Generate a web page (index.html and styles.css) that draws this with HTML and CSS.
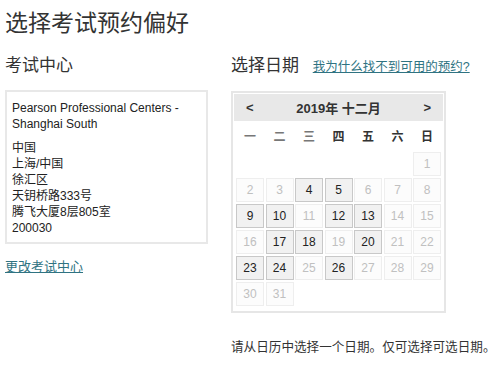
FILE: index.html
```html
<!DOCTYPE html>
<html>
  <head>
    <meta http-equiv="Content-Type" content="text/html; charset=utf-8" />
    <title>选择考试预约偏好</title>
    <link rel="stylesheet" href="styles.css">
  </head>
  <body>
    <div class="page">
      <h1 class="page-title">选择考试预约偏好</h1>
      <div class="columns">
        <section class="center-col">
          <h2 class="col-title">考试中心</h2>
          <div class="center-box">
            <p class="center-name">Pearson Professional Centers - Shanghai South</p>
            <p class="center-addr">
              中国<br />
              上海/中国<br />
              徐汇区<br />
              天钥桥路333号<br />
              腾飞大厦8层805室<br />
              200030
            </p>
          </div>
          <a href="#" class="change-link">更改考试中心</a>
        </section>
        <section class="date-col">
          <h2 class="col-title">
            选择日期
            <a href="#" class="help-link">我为什么找不到可用的预约?</a>
          </h2>
          <div class="calendar">
            <div class="cal-head">
              <span class="cal-nav">&lt;</span>
              <span class="cal-month">2019年 十二月</span>
              <span class="cal-nav">&gt;</span>
            </div>
            <div class="cal-weekdays">
              <span class="light">一</span><span class="light">二</span><span class="light">三</span><span>四</span><span>五</span><span>六</span><span>日</span>
            </div>
            <div class="cal-days">
              <span class="day empty"></span>
              <span class="day empty"></span>
              <span class="day empty"></span>
              <span class="day empty"></span>
              <span class="day empty"></span>
              <span class="day empty"></span>
              <span class="day off">1</span>
              <span class="day off">2</span>
              <span class="day off">3</span>
              <span class="day open">4</span>
              <span class="day open">5</span>
              <span class="day off">6</span>
              <span class="day off">7</span>
              <span class="day off">8</span>
              <span class="day open">9</span>
              <span class="day open">10</span>
              <span class="day off">11</span>
              <span class="day open">12</span>
              <span class="day open">13</span>
              <span class="day off">14</span>
              <span class="day off">15</span>
              <span class="day off">16</span>
              <span class="day open">17</span>
              <span class="day open">18</span>
              <span class="day off">19</span>
              <span class="day open">20</span>
              <span class="day off">21</span>
              <span class="day off">22</span>
              <span class="day open">23</span>
              <span class="day open">24</span>
              <span class="day off">25</span>
              <span class="day open">26</span>
              <span class="day off">27</span>
              <span class="day off">28</span>
              <span class="day off">29</span>
              <span class="day off">30</span>
              <span class="day off">31</span>
            </div>
          </div>
          <p class="cal-note">请从日历中选择一个日期。仅可选择可选日期。</p>
        </section>
      </div>
    </div>
  </body>
</html>
```

FILE: styles.css
```css
* {
  font-family: "Liberation Sans", "Noto Sans CJK SC", sans-serif;
  box-sizing: border-box;
}
html,
body {
  margin: 0;
  padding: 0;
  background: #fff;
  color: #333;
}
.page {
  padding: 8px 5px 0 5px;
}
.page-title {
  margin: 0;
  font-size: 23px;
  line-height: 30px;
  font-weight: normal;
  color: #333;
}
.columns {
  display: flex;
  gap: 23px;
  margin-top: 17px;
}
.center-col {
  width: 203px;
}
.date-col {
  width: 262px;
}
.col-title {
  margin: 0 0 13px 0;
  font-size: 17px;
  line-height: 22px;
  font-weight: normal;
  color: #333;
  white-space: nowrap;
}
.help-link {
  margin-left: 9px;
  font-size: 12.5px;
  color: #2f7382;
}
.center-box {
  border: 2px solid #e8e8e8;
  padding: 8px 5px 6px 5px;
  font-size: 12px;
  line-height: 16px;
  color: #222;
}
.center-box p {
  margin: 0;
}
.center-name {
  margin-bottom: 8px !important;
}
.change-link {
  display: inline-block;
  margin-top: 14px;
  font-size: 13px;
  line-height: 18px;
  color: #2f7382;
}
.calendar {
  width: 215px;
  border: 2px solid #e6e6e6;
  padding: 1px 1px 5px 1px;
}
.cal-head {
  display: flex;
  justify-content: space-between;
  align-items: center;
  height: 27px;
  padding: 0 12px;
  background: #e8e8e8;
  font-size: 13px;
  font-weight: bold;
  color: #333;
}
.cal-weekdays {
  display: grid;
  grid-template-columns: repeat(7, 28px);
  column-gap: 1.5px;
  padding: 0 2px;
  height: 28px;
  margin-bottom: 3px;
  align-items: center;
  font-size: 12px;
  font-weight: bold;
  color: #333;
}
.cal-weekdays span {
  text-align: center;
}
.cal-weekdays .light {
  color: #777;
}
.cal-days {
  display: grid;
  grid-template-columns: repeat(7, 28px);
  grid-auto-rows: 24px;
  gap: 2px 1.5px;
  padding: 0 2px;
}
.day {
  display: flex;
  align-items: center;
  justify-content: center;
  font-size: 12px;
}
.day.off {
  border: 1px solid #eeeeee;
  background: #fcfcfc;
  color: #c0c0c0;
}
.day.open {
  border: 1px solid #c8c8c8;
  background: #f1f1f1;
  color: #222;
}
.cal-note {
  margin: 25px 0 0 0;
  font-size: 12.6px;
  line-height: 18px;
  color: #333;
  white-space: nowrap;
}
```
